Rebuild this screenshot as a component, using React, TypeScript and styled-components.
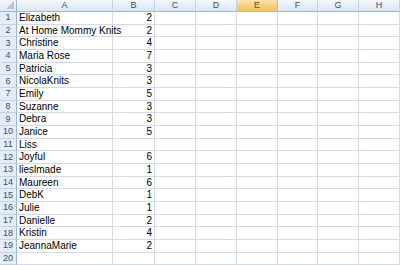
import React from "react";
import styled, { createGlobalStyle } from "styled-components";

const GlobalStyle = createGlobalStyle`
  html, body {
    margin: 0;
    padding: 0;
    background: #ffffff;
    overflow: hidden;
  }
`;

const columns = ["A", "B", "C", "D", "E", "F", "G", "H"];
const widths = [17, 96, 42, 41, 41, 41, 40, 41, 41];
const selectedColumn = "E";

const rows: [string, number | null][] = [
  ["Elizabeth", 2],
  ["At Home Mommy Knits", 2],
  ["Christine", 4],
  ["Maria Rose", 7],
  ["Patricia", 3],
  ["NicolaKnits", 3],
  ["Emily", 5],
  ["Suzanne", 3],
  ["Debra", 3],
  ["Janice", 5],
  ["Liss", null],
  ["Joyful", 6],
  ["lieslmade", 1],
  ["Maureen", 6],
  ["DebK", 1],
  ["Julie", 1],
  ["Danielle", 2],
  ["Kristin", 4],
  ["JeannaMarie", 2],
  ["", null],
];

const Sheet = styled.div`
  display: grid;
  grid-template-columns: ${widths.map((w) => w + "px").join(" ")};
  grid-template-rows: 12px repeat(20, 12.68px);
  width: 400px;
  height: 265px;
  overflow: hidden;
  font-family: "Liberation Sans", Arial, sans-serif;
  font-size: 10px;
  color: #000;
`;

const Corner = styled.div`
  position: relative;
  background: linear-gradient(#f3f6fb, #e1e9f4);
  border-right: 1px solid #9eb6ce;
  border-bottom: 1px solid #9eb6ce;
  box-sizing: border-box;

  &::after {
    content: "";
    position: absolute;
    right: 2px;
    bottom: 2px;
    width: 0;
    height: 0;
    border-left: 8px solid transparent;
    border-bottom: 8px solid #b5c6da;
  }
`;

const ColHeader = styled.div<{ $selected?: boolean }>`
  display: flex;
  align-items: center;
  justify-content: center;
  box-sizing: border-box;
  background: ${(p) =>
    p.$selected
      ? "linear-gradient(#fbe3b0, #f6cc78 60%, #f3c163)"
      : "linear-gradient(#f5f8fc, #e4ecf7 60%, #dbe5f2)"};
  border-right: 1px solid ${(p) => (p.$selected ? "#f2b950" : "#c5d3e3")};
  border-bottom: 1px solid ${(p) => (p.$selected ? "#f2b14a" : "#9eb6ce")};
  color: ${(p) => (p.$selected ? "#6a4a10" : "#3b4f69")};
  font-size: 9px;
  line-height: 1;
`;

const RowHeader = styled.div`
  display: flex;
  align-items: center;
  justify-content: center;
  box-sizing: border-box;
  background: #e4ecf7;
  border-right: 1px solid #9eb6ce;
  border-bottom: 1px solid #c5d3e3;
  color: #3b4f69;
  font-size: 9px;
  line-height: 1;
`;

const Cell = styled.div<{ $numeric?: boolean }>`
  display: flex;
  align-items: center;
  justify-content: ${(p) => (p.$numeric ? "flex-end" : "flex-start")};
  box-sizing: border-box;
  padding: 0 2px;
  border-right: 1px solid #d4dbe6;
  border-bottom: 1px solid #d4dbe6;
  white-space: nowrap;
  overflow: visible;
  line-height: 1;
`;

const App: React.FC = () => {
  return (
    <>
      <GlobalStyle />
      <Sheet>
        <Corner />
        {columns.map((c) => (
          <ColHeader key={c} $selected={c === selectedColumn}>
            {c}
          </ColHeader>
        ))}
        {rows.map(([name, value], i) => (
          <React.Fragment key={i}>
            <RowHeader>{i + 1}</RowHeader>
            <Cell>{name}</Cell>
            <Cell $numeric>{value ?? ""}</Cell>
            {columns.slice(2).map((c) => (
              <Cell key={c} />
            ))}
          </React.Fragment>
        ))}
      </Sheet>
    </>
  );
};

export default App;
